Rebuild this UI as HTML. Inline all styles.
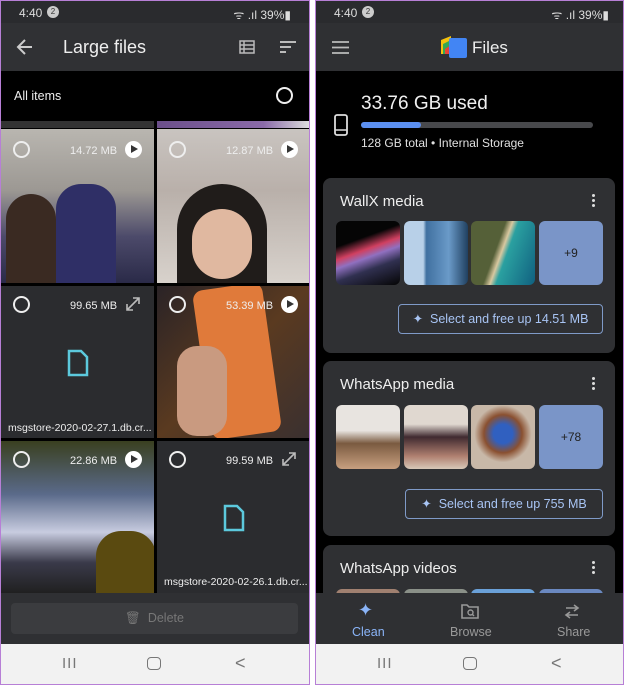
<!DOCTYPE html><html><head><meta charset="utf-8"><style>
*{margin:0;padding:0;box-sizing:border-box}
body{width:624px;height:685px;background:#fff;font-family:"Liberation Sans",sans-serif;position:relative;overflow:hidden;color:#e8e8e8}
.ph{position:absolute;top:0;height:685px;border:1px solid #b77fd6;overflow:hidden;background:#000}
.a{position:absolute}
.st{top:0;left:0;right:0;height:22px;background:#2a2b2e;font-size:12px;color:#ddd}
.tb{top:22px;left:0;right:0;height:48px;background:#303134}
.nav{left:0;right:0;top:643px;height:42px;background:#f2f2f2;color:#777}
.tile{position:absolute;overflow:hidden}
.circ{position:absolute;width:17px;height:17px;border:2px solid #eee;border-radius:50%}
.play{position:absolute;width:17px;height:17px;background:#fff;border-radius:50%}
.play:after{content:"";position:absolute;left:6px;top:4px;border-left:7px solid #333;border-top:4.5px solid transparent;border-bottom:4.5px solid transparent}
.sz{position:absolute;font-size:11px;color:#eee}
.fn{position:absolute;font-size:10.5px;color:#eee;white-space:nowrap}
.card{position:absolute;left:7px;right:8px;background:#2f3033;border-radius:8px}
.ct{position:absolute;left:17px;font-size:15px;color:#eee}
.dots{position:absolute;right:20px;width:3px;height:3px;background:#ddd;border-radius:50%;box-shadow:0 5px 0 #ddd,0 10px 0 #ddd}
.th{position:absolute;width:64px;height:64px;border-radius:6px}
.btn{position:absolute;border:1px solid #7f9ac8;border-radius:4px;color:#a8c4f4;font-size:12.5px;text-align:center;line-height:28px}
</style></head><body>
<!-- LEFT -->
<div class="ph" style="left:0;width:310px">
<div class="a st"><span class="a" style="left:18px;top:5px">4:40</span><span class="a" style="left:46px;top:5px;width:12px;height:12px;border-radius:50%;background:#ccc;color:#333;font-size:8px;text-align:center;line-height:12px">2</span><span class="a" style="right:18px;top:5px">ᯤ .ıl 39%▮</span></div>
<div class="a tb">
<svg class="a" style="left:14px;top:14px" width="20" height="20" viewBox="0 0 20 20"><path d="M17 10H4M10 3L3 10l7 7" stroke="#ccc" stroke-width="2" fill="none"/></svg>
<span class="a" style="left:62px;top:14px;font-size:18px;color:#eee">Large files</span>
<svg class="a" style="left:238px;top:17px" width="16" height="14"><rect x="1" y="1" width="14" height="12" fill="none" stroke="#bbb" stroke-width="1.5"/><path d="M1 5h14M1 9h14M5 1v12" stroke="#bbb" stroke-width="1.5"/></svg>
<svg class="a" style="left:279px;top:18px" width="16" height="12"><path d="M0 1h16M0 6h11M0 11h6" stroke="#bbb" stroke-width="2"/></svg>
</div>
<div class="a" style="top:70px;left:0;right:0;height:50px;background:#000"><span class="a" style="left:13px;top:18px;font-size:12.5px;color:#eee">All items</span><div class="circ" style="left:275px;top:16px"></div></div>
<div class="a" style="top:120px;left:0;width:153px;height:7px;background:#333"></div>
<div class="a" style="top:120px;left:156px;width:152px;height:7px;background:linear-gradient(90deg,#6b4f8a,#8a6aa8 70%,#ddd)"></div>
<div class="tile" style="left:0;top:128px;width:153px;height:154px;background:linear-gradient(180deg,#b9b6b0 0%,#9c9893 40%,#4c4a6a 70%,#2a2a48 100%)"><div class="a" style="left:5px;top:65px;width:50px;height:90px;border-radius:25px 25px 0 0;background:#3a2a22"></div><div class="a" style="left:55px;top:55px;width:60px;height:100px;border-radius:25px 25px 0 0;background:#2f2f66"></div><div class="circ" style="left:12px;top:12px"></div><span class="sz" style="left:69px;top:16px">14.72 MB</span><div class="play" style="left:124px;top:12px"></div></div>
<div class="tile" style="left:156px;top:128px;width:152px;height:154px;background:linear-gradient(180deg,#c9c4c0 0%,#b9b0aa 40%,#d8d2cc 100%)"><div class="a" style="left:20px;top:55px;width:90px;height:110px;border-radius:45px 45px 0 0;background:#201c1a"></div><div class="a" style="left:35px;top:80px;width:60px;height:70px;border-radius:30px;background:#e0b8a0"></div><div class="circ" style="left:12px;top:12px"></div><span class="sz" style="left:69px;top:16px">12.87 MB</span><div class="play" style="left:124px;top:12px"></div></div>
<div class="tile" style="left:0;top:285px;width:153px;height:152px;background:#2b2c2f"><div class="circ" style="left:12px;top:10px"></div><span class="sz" style="left:69px;top:14px">99.65 MB</span><svg class="a" style="left:124px;top:10px" width="16" height="16"><path d="M2 14L14 2M8 2h6v6M2 8v6h6" stroke="#bbb" stroke-width="1.6" fill="none"/></svg><svg class="a" style="left:66px;top:63px" width="22" height="28"><path d="M2 2h12l6 6v18H2z" fill="none" stroke="#5cc9dd" stroke-width="2.5"/></svg><span class="fn" style="left:7px;top:136px">msgstore-2020-02-27.1.db.cr...</span></div>
<div class="tile" style="left:156px;top:285px;width:152px;height:152px;background:linear-gradient(135deg,#2a2326 0%,#5a3a20 50%,#3a3030 100%)"><div class="a" style="left:45px;top:0;width:70px;height:150px;background:#e07a3a;border-radius:10px;transform:rotate(-8deg)"></div><div class="a" style="left:20px;top:60px;width:50px;height:90px;background:#c99a80;border-radius:20px"></div><div class="circ" style="left:12px;top:10px"></div><span class="sz" style="left:69px;top:14px">53.39 MB</span><div class="play" style="left:124px;top:10px"></div></div>
<div class="tile" style="left:0;top:440px;width:153px;height:152px;background:linear-gradient(180deg,#3a4020 0%,#5a6a8a 35%,#c8cce0 60%,#3a3a4a 80%,#202020 100%)"><div class="a" style="left:95px;top:90px;width:60px;height:70px;border-radius:25px 25px 0 0;background:#5a4a10"></div><div class="circ" style="left:12px;top:10px"></div><span class="sz" style="left:69px;top:14px">22.86 MB</span><div class="play" style="left:124px;top:10px"></div></div>
<div class="tile" style="left:156px;top:440px;width:152px;height:152px;background:#2b2c2f"><div class="circ" style="left:12px;top:10px"></div><span class="sz" style="left:69px;top:14px">99.59 MB</span><svg class="a" style="left:124px;top:10px" width="16" height="16"><path d="M2 14L14 2M8 2h6v6M2 8v6h6" stroke="#bbb" stroke-width="1.6" fill="none"/></svg><svg class="a" style="left:66px;top:63px" width="22" height="28"><path d="M2 2h12l6 6v18H2z" fill="none" stroke="#5cc9dd" stroke-width="2.5"/></svg><span class="fn" style="left:7px;top:135px">msgstore-2020-02-26.1.db.cr...</span></div>
<div class="a" style="top:592px;left:0;right:0;height:51px;background:#2f3033"><div class="a" style="left:10px;top:10px;width:287px;height:31px;background:#3b3c3f;border-radius:4px;text-align:center;line-height:31px;font-size:12.5px;color:#777">🗑&nbsp; Delete</div></div>
<div class="a nav"><span class="a" style="left:61px;top:11px;font-size:15px;letter-spacing:1px">III</span><span class="a" style="left:146px;top:13px;width:14px;height:13px;border:1.7px solid #777;border-radius:4px"></span><span class="a" style="left:234px;top:9px;font-size:18px">&lt;</span></div>
</div>
<!-- RIGHT -->
<div class="ph" style="left:315px;width:309px">
<div class="a st"><span class="a" style="left:18px;top:5px">4:40</span><span class="a" style="left:46px;top:5px;width:12px;height:12px;border-radius:50%;background:#ccc;color:#333;font-size:8px;text-align:center;line-height:12px">2</span><span class="a" style="right:14px;top:5px">ᯤ .ıl 39%▮</span></div>
<div class="a tb" style="background:#2f3033">
<svg class="a" style="left:16px;top:18px" width="17" height="13"><path d="M0 1h17M0 6.5h17M0 12h17" stroke="#bbb" stroke-width="1.8"/></svg>
<svg class="a" style="left:125px;top:13px" width="27" height="22"><path d="M0 4L10 0v18H0z" fill="#f4c20d"/><path d="M2 8L14 2v16H2z" fill="#34a853"/><path d="M4 13L16 5v13H4z" fill="#ea4335"/><rect x="8" y="2" width="18" height="20" rx="2" fill="#4285f4"/></svg>
<span class="a" style="left:156px;top:15px;font-size:17px;color:#eee">Files</span>
</div>
<svg class="a" style="left:18px;top:113px" width="14" height="22"><rect x="1" y="1" width="12" height="20" rx="2" fill="none" stroke="#ddd" stroke-width="1.8"/><path d="M1 16h12" stroke="#ddd" stroke-width="1.5"/></svg>
<span class="a" style="left:45px;top:92px;font-size:19px;color:#f0f0f0">33.76 GB used</span>
<div class="a" style="left:45px;top:121px;width:232px;height:6px;border-radius:3px;background:#48494c"><div style="width:60px;height:6px;border-radius:3px;background:#5b8ff0"></div></div>
<span class="a" style="left:45px;top:135px;font-size:12px;color:#e0e0e0">128 GB total • Internal Storage</span>
<div class="card" style="top:177px;height:175px"><span class="ct" style="top:15px">WallX media</span><div class="dots" style="top:16px"></div>
<div class="th" style="left:13px;top:43px;background:linear-gradient(160deg,#050505 30%,#d04060 45%,#9070c0 55%,#303050 70%,#050505)"></div>
<div class="th" style="left:81px;top:43px;background:linear-gradient(90deg,#b8d0e8 30%,#4070a0 35%,#6a9ac8 70%,#204060)"></div>
<div class="th" style="left:148px;top:43px;background:linear-gradient(110deg,#556038 40%,#d8c8a0 48%,#2aa0a0 55%,#106080)"></div>
<div class="th" style="left:216px;top:43px;background:#7a95c8;color:#222;font-size:12px;text-align:center;line-height:64px">+9</div>
<div class="btn" style="left:75px;top:126px;width:205px">✦&nbsp; Select and free up 14.51 MB</div></div>
<div class="card" style="top:360px;height:175px"><span class="ct" style="top:15px">WhatsApp media</span><div class="dots" style="top:16px"></div>
<div class="th" style="left:13px;top:44px;background:linear-gradient(180deg,#e8e4e0 40%,#7a5a40 60%,#c8a080)"></div>
<div class="th" style="left:81px;top:44px;background:linear-gradient(180deg,#e0d8d0 30%,#402a30 50%,#b08070 80%,#d8c8b8)"></div>
<div class="th" style="left:148px;top:44px;background:radial-gradient(circle at 50% 45%,#3060c0 20%,#8a5030 40%,#c8b8a8 60%)"></div>
<div class="th" style="left:216px;top:44px;background:#7a95c8;color:#222;font-size:12px;text-align:center;line-height:64px">+78</div>
<div class="btn" style="left:82px;top:128px;width:198px">✦&nbsp; Select and free up 755 MB</div></div>
<div class="card" style="top:544px;height:80px"><span class="ct" style="top:15px">WhatsApp videos</span><div class="dots" style="top:16px"></div>
<div class="th" style="left:13px;top:44px;background:#a08070"></div><div class="th" style="left:81px;top:44px;background:#8a9088"></div><div class="th" style="left:148px;top:44px;background:#6aa0d8"></div><div class="th" style="left:216px;top:44px;background:#6a88c0"></div></div>
<div class="a" style="top:592px;left:0;right:0;height:51px;background:#2f3033;font-size:12.5px">
<span class="a" style="left:42px;top:7px;color:#8ab4f8;font-size:18px">✦</span><span class="a" style="left:36px;top:32px;color:#8ab4f8">Clean</span>
<svg class="a" style="left:145px;top:11px" width="18" height="15"><path d="M1 3v11h16V3H8L6 1H1z" fill="none" stroke="#999" stroke-width="1.6"/><circle cx="9.5" cy="8.5" r="2.5" fill="none" stroke="#999" stroke-width="1.4"/><path d="M11 10l2 2" stroke="#999" stroke-width="1.4"/></svg><span class="a" style="left:134px;top:32px;color:#999">Browse</span>
<svg class="a" style="left:248px;top:11px" width="16" height="15"><path d="M2 4h12M10 1l4 3-4 3M14 11H2M6 8l-4 3 4 3" fill="none" stroke="#999" stroke-width="1.6"/></svg><span class="a" style="left:241px;top:32px;color:#999">Share</span></div>
<div class="a nav"><span class="a" style="left:61px;top:11px;font-size:15px;letter-spacing:1px">III</span><span class="a" style="left:147px;top:13px;width:14px;height:13px;border:1.7px solid #777;border-radius:4px"></span><span class="a" style="left:235px;top:9px;font-size:18px">&lt;</span></div>
</div>
</body></html>
